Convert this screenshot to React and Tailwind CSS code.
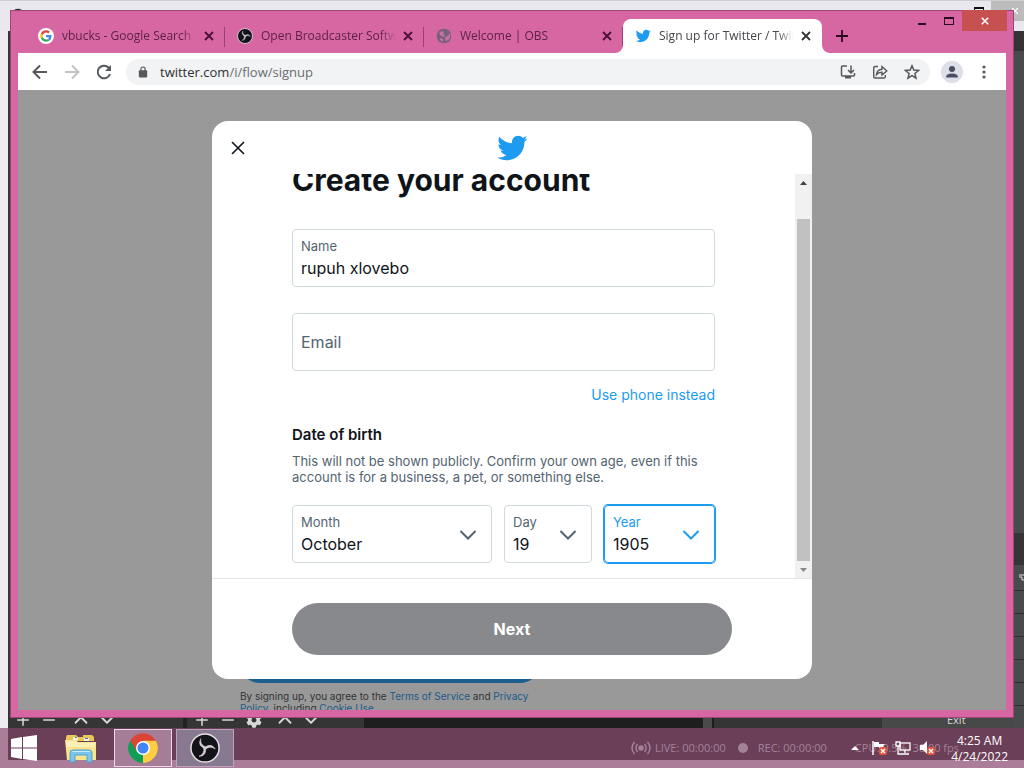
import { useState } from 'react';
import { Plus, Minus, ChevronUp, ChevronDown, X } from 'lucide-react';
import { FaCog } from 'react-icons/fa';

const BIRD = 'M23.643 4.937c-.835.37-1.732.62-2.675.733.962-.576 1.7-1.49 2.048-2.578-.9.534-1.897.922-2.958 1.13-.85-.904-2.06-1.47-3.4-1.47-2.572 0-4.658 2.086-4.658 4.66 0 .364.042.718.12 1.06-3.873-.195-7.304-2.05-9.602-4.868-.4.69-.63 1.49-.63 2.342 0 1.616.823 3.043 2.072 3.878-.764-.025-1.482-.234-2.11-.583v.06c0 2.257 1.605 4.14 3.737 4.568-.392.106-.803.162-1.227.162-.3 0-.593-.028-.877-.082.593 1.85 2.313 3.198 4.352 3.234-1.595 1.25-3.604 1.995-5.786 1.995-.376 0-.747-.022-1.112-.065 2.062 1.323 4.51 2.093 7.14 2.093 8.57 0 13.255-7.098 13.255-13.254 0-.2-.005-.402-.014-.602.91-.658 1.7-1.477 2.323-2.41z';

const Bird = ({ className }) => (
  <svg viewBox="0 0 24 24" className={className} fill="#1d9bf0"><path d={BIRD} /></svg>
);

const ObsLogo = ({ className }) => (
  <svg viewBox="0 0 32 32" className={className}>
    <circle cx="16" cy="16" r="15" fill="#15131a" stroke="#e6e1e6" strokeWidth="1.600" />
    {[0, 120, 240].map(a => (
      <path key={a} transform={`rotate(${a} 16 16)`} d="M11.500 6Q7.500 13 16 16.800L17 15Q10.500 12.500 11.500 6z" fill="#d5d0d6" stroke="#d5d0d6" strokeWidth=".6" />
    ))}
  </svg>
);

const GoogleLogo = () => (
  <svg viewBox="0 0 48 48" className="size-4 shrink-0">
    <circle cx="24" cy="24" r="24" fill="#fff" />
    <g transform="translate(7 7) scale(.71)">
      <path fill="#EA4335" d="M24 9.500c3.540 0 6.710 1.220 9.210 3.600l6.850-6.850C35.900 2.380 30.470 0 24 0 14.620 0 6.510 5.380 2.560 13.220l7.980 6.190C12.430 13.720 17.740 9.500 24 9.500z" />
      <path fill="#4285F4" d="M46.980 24.550c0-1.570-.15-3.090-.38-4.550H24v9.020h12.940c-.58 2.960-2.260 5.480-4.780 7.180l7.730 6c4.510-4.180 7.090-10.360 7.090-17.650z" />
      <path fill="#FBBC05" d="M10.530 28.590c-.48-1.450-.76-2.990-.76-4.590s.27-3.140.76-4.590l-7.980-6.190C.92 16.460 0 20.120 0 24c0 3.880.92 7.540 2.560 10.780l7.970-6.190z" />
      <path fill="#34A853" d="M24 48c6.480 0 11.930-2.130 15.890-5.810l-7.730-6c-2.150 1.450-4.920 2.300-8.160 2.300-6.260 0-11.570-4.220-13.470-9.910l-7.980 6.190C6.510 42.620 14.620 48 24 48z" />
    </g>
  </svg>
);

const Globe = () => (
  <svg viewBox="0 0 16 16" className="size-4 shrink-0">
    <circle cx="8" cy="8" r="7.300" fill="#76607a" />
    <path d="M3 5l3-2 2 1-1 2 2 1-1 2-3-1zM9 9l3-1 2-3 .5 3-2 4-3 1zM4 10l3 1v3l-3-2z" fill="#c86fa5" />
  </svg>
);

const ChromeLogo = () => (
  <svg viewBox="0 0 48 48" className="size-8">
    <path fill="#db4437" d="M24 24 4.950 13A22 22 0 0 1 43.050 13z" />
    <path fill="#0f9d58" d="M24 24v22A22 22 0 0 1 4.950 13z" />
    <path fill="#ffcd40" d="M24 24 43.050 13A22 22 0 0 1 24 46z" />
    <path fill="#db4437" d="M24 13h19.050L33 24zM4.950 13 24 13 14.500 29.500z" />
    <path fill="#0f9d58" d="M4.950 13 14.500 29.500 24 35 24 46A22 22 0 0 1 4.950 13z" />
    <path fill="#ffcd40" d="M43.050 13H24l9.500 16.500L24 46A22 22 0 0 0 43.050 13z" />
    <circle cx="24" cy="24" r="10.500" fill="#fff" />
    <circle cx="24" cy="24" r="8.300" fill="#4285f4" />
  </svg>
);

const Explorer = () => (
  <svg viewBox="0 0 32 30" className="h-[30px] w-8">
    <path d="M1 4l1-2h9l2 2h5V2h9l2 2v4H1z" fill="#e8c65a" />
    <path d="M8 4h5v3H8zM19 5h5v3h-5z" fill="#f7f3e0" />
    <path d="M10 4h2v1h-2z" fill="#2a8f5a" /><path d="M20 5h3v1h-3z" fill="#3a6ed0" />
    <path d="M0 7h11l2 2h18v18H2z" fill="#f8e48e" />
    <path d="M1 8h10l2 2h17v4H1z" fill="#fcf0b4" />
    <path d="M5 29v-9q0-3 3-3h16q3 0 3 3v9h-5v-7H10v7z" fill="#7cc4ea" stroke="#4ba3d4" />
    <path d="M6 19q1-1 3-1h14q2 0 3 1z" fill="#c9ebfa" />
  </svg>
);

const TABS = [
  { title: 'vbucks - Google Search', icon: <GoogleLogo /> },
  { title: 'Open Broadcaster Software', icon: <ObsLogo className="size-4 shrink-0" /> },
  { title: 'Welcome | OBS', icon: <Globe /> },
];

function Tab({ icon, title, active }) {
  return (
    <div className={active
      ? 'relative flex h-[34px] w-[199px] items-center rounded-t-lg bg-white pl-3 pr-2 text-[#45454a]'
      : 'relative flex h-[34px] w-[199px] items-center pl-3 pr-2 text-[#5c1f47]'}>
      {icon}
      <span className="ml-2 min-w-0 flex-1 overflow-hidden whitespace-nowrap text-xs [mask-image:linear-gradient(to_right,black_88%,transparent)]">{title}</span>
      <button aria-label="Close tab" className={active ? 'ml-1 grid size-4 place-items-center text-[#333]' : 'ml-1 grid size-4 place-items-center text-[#4a1038]'}>
        <svg viewBox="0 0 10 10" className="size-[10px]" stroke="currentColor" strokeWidth="1.800"><path d="M1 1l8 8M9 1l-8 8" /></svg>
      </button>
      {!active && <i className="absolute right-0 top-2 h-5 w-px bg-[#a03c78]" />}
      {active && <>
        <svg viewBox="0 0 8 8" className="absolute -left-2 bottom-0 size-2" fill="#fff"><path d="M8 0v8H0a8 8 0 0 0 8-8z" /></svg>
        <svg viewBox="0 0 8 8" className="absolute -right-2 bottom-0 size-2" fill="#fff"><path d="M0 0v8h8a8 8 0 0 1-8-8z" /></svg>
      </>}
    </div>
  );
}

function TabStrip() {
  return (
    <div className="flex h-[43px] items-end pl-2">
      {TABS.map(t => <Tab key={t.title} {...t} />)}
      <Tab active title="Sign up for Twitter / Twitter" icon={<Bird className="size-4 shrink-0" />} />
      <button aria-label="New tab" className="ml-[14px] flex h-[34px] items-center text-[#2c0a22]">
        <svg viewBox="0 0 12 12" className="size-3" stroke="currentColor" strokeWidth="1.800"><path d="M6 0v12M0 6h12" /></svg>
      </button>
      <div className="-mr-px ml-auto flex items-start self-start text-[#2c0a22]">
        <button aria-label="Minimize" className="grid h-5 w-[27px] place-items-center">
          <svg viewBox="0 0 10 10" className="size-[10px]"><path d="M1 8h8v2H1z" fill="currentColor" /></svg>
        </button>
        <button aria-label="Maximize" className="grid h-[22px] w-[27px] place-items-center">
          <svg viewBox="0 0 10 8" className="h-2 w-[10px]"><path d="M0 0h10v8H0zM1 2v5h8V2z" fill="currentColor" fillRule="evenodd" /></svg>
        </button>
        <button aria-label="Close" className="grid h-[21px] w-[45px] place-items-center bg-[#c75050] text-white">
          <svg viewBox="0 0 10 10" className="size-2" stroke="currentColor" strokeWidth="2"><path d="M1 1l8 8M9 1l-8 8" /></svg>
        </button>
      </div>
    </div>
  );
}

function Toolbar() {
  return (
    <div className="flex h-[37px] items-center bg-white pl-3 text-[#55585c]">
      <button aria-label="Back" className="w-5">
        <svg viewBox="0 0 20 20" className="size-5" fill="none" stroke="currentColor" strokeWidth="2"><path d="M17 10H4M10 3.500 3.500 10l6.500 6.500" /></svg>
      </button>
      <button aria-label="Forward" className="ml-3 w-5 text-[#c4c2c2]">
        <svg viewBox="0 0 20 20" className="size-5" fill="none" stroke="currentColor" strokeWidth="2"><path d="M3 10h13M10 3.500l6.500 6.500-6.500 6.500" /></svg>
      </button>
      <button aria-label="Reload" className="ml-3 w-5">
        <svg viewBox="0 0 20 20" className="size-5" fill="none" stroke="currentColor" strokeWidth="2"><path d="M16 12a6.300 6.300 0 1 1-1.500-6.500L16 7" /><path d="M17 3v6h-6z" fill="currentColor" stroke="none" /></svg>
      </button>
      <div className="ml-3 flex h-[26px] min-w-0 flex-1 items-center rounded-full bg-[#f1f3f4] pl-3 pr-[10px]">
        <svg viewBox="0 0 12 14" className="h-3 w-[10px]"><rect x="1" y="5" width="10" height="8.500" rx="1" fill="currentColor" /><path d="M3.500 6V3.500a2.500 2.500 0 0 1 5 0V6" fill="none" stroke="currentColor" strokeWidth="1.400" /></svg>
        <div className="ml-3 min-w-0 flex-1 text-[13px] leading-5 text-[#6a6d72]"><span className="text-[#2f3034]">twitter.com</span>/i/flow/signup</div>
        <div className="flex items-center gap-4">
          <button aria-label="Install">
            <svg viewBox="0 0 16 16" className="size-4" fill="none" stroke="currentColor" strokeWidth="1.500"><path d="M7 2H2.500q-1 0-1 1v8q0 1 1 1h11q1 0 1-1V9M11 1.500v7M8 6l3 3 3-3" /><path d="M5 12h6v2.500H5z" fill="currentColor" stroke="none" /></svg>
          </button>
          <button aria-label="Share">
            <svg viewBox="0 0 16 16" className="size-4" fill="none" stroke="currentColor" strokeWidth="1.400"><path d="M6 2.500H3q-1.300 0-1.300 1.300v9q0 1.200 1.300 1.200h9q1.300 0 1.300-1.200V11" /><path d="M4.500 10.500q.5-5 5.500-5.300V2.500L14.800 7 10 11V8.200q-3.800 0-5.500 2.300z" /></svg>
          </button>
          <button aria-label="Bookmark">
            <svg viewBox="0 0 16 16" className="size-4" fill="none" stroke="currentColor" strokeWidth="1.500"><path d="M8 1.800l1.800 4.300 4.700.4-3.600 3 1.100 4.600L8 11.600l-4 2.500 1.100-4.600-3.600-3 4.700-.4z" /></svg>
          </button>
        </div>
      </div>
      <button aria-label="Profile" className="mx-[11px] grid size-[22px] place-items-center rounded-full bg-[#dde0e8] text-[#4a4e60]">
        <svg viewBox="0 0 14 14" className="size-[14px]" fill="currentColor"><circle cx="7" cy="4" r="3" /><path d="M1 12.500q0-4 6-4t6 4z" /></svg>
      </button>
      <button aria-label="Menu" className="mr-3 grid h-5 w-5 place-items-center">
        <svg viewBox="0 0 4 14" className="h-[14px] w-1" fill="currentColor"><circle cx="2" cy="2" r="1.600" /><circle cx="2" cy="7" r="1.600" /><circle cx="2" cy="12" r="1.600" /></svg>
      </button>
    </div>
  );
}

function SelectField({ id, label, options, focused, className }) {
  const [value, setValue] = useState(options[0]);
  return (
    <div className={`relative flex h-[58px] flex-col rounded border pl-2 pt-2 ${className}`}>
      <label htmlFor={id} className={focused ? 'text-[13px] leading-4 text-[#1d9bf0]' : 'text-[13px] leading-4 text-[#536471]'}>{label}</label>
      <select id={id} value={value} onChange={e => setValue(e.target.value)}
        className="mt-[2px] w-full appearance-none bg-transparent text-base leading-6 text-[#0f1419] outline-none">
        {options.map(o => <option key={o}>{o}</option>)}
      </select>
      <svg viewBox="0 0 18 10" className={focused ? 'pointer-events-none absolute right-[14px] top-6 h-[10px] w-[18px] text-[#1d9bf0]' : 'pointer-events-none absolute right-[14px] top-6 h-[10px] w-[18px] text-[#536471]'} fill="none" stroke="currentColor" strokeWidth="2"><path d="M1.500 1 9 8.500 16.500 1" /></svg>
    </div>
  );
}

function SignupModal() {
  const [name, setName] = useState('rupuh xlovebo');
  const [email, setEmail] = useState('');

  return (
    <div role="dialog" aria-label="Create your account" className="flex w-[600px] flex-col overflow-hidden rounded-2xl bg-white">
      <div className="grid h-[53px] grid-cols-[1fr_auto_1fr] items-center px-4">
        <button aria-label="Close" className="grid size-5 place-items-center text-[#0f1419]">
          <svg viewBox="0 0 14 14" className="size-[14px]" stroke="currentColor" strokeWidth="1.600"><path d="M1 1l12 12M13 1L1 13" /></svg>
        </button>
        <Bird className="size-8" />
      </div>

      <div className="flex h-[404px] overflow-hidden">
        <form className="min-w-0 flex-1 px-20">
          <h1 className="-mt-3 text-[30px] font-bold leading-9 text-[#0f1419]">Create your account</h1>
          <div className="mt-[31px] flex h-[58px] flex-col rounded border border-[#cfd9de] px-2 pt-2">
            <label htmlFor="name" className="text-[13px] leading-4 text-[#536471]">Name</label>
            <input id="name" value={name} onChange={e => setName(e.target.value)} className="mt-[2px] text-base leading-6 text-[#0f1419] outline-none" />
          </div>
          <div className="mt-[26px] flex h-[58px] items-center rounded border border-[#cfd9de] px-2">
            <input aria-label="Email" placeholder="Email" value={email} onChange={e => setEmail(e.target.value)}
              className="w-full text-base leading-6 outline-none placeholder:text-[#536471]" />
          </div>
          <div className="mt-[14px] text-right text-sm leading-5"><a href="#phone" className="text-[#1d9bf0]">Use phone instead</a></div>
          <h2 className="mt-5 text-[15px] font-semibold leading-5 text-[#0f1419]">Date of birth</h2>
          <p className="mt-2 text-[13px] leading-4 text-[#536471]">This will not be shown publicly. Confirm your own age, even if this account is for a business, a pet, or something else.</p>
          <div className="mt-5 flex gap-3">
            <SelectField id="month" label="Month" options={['October', 'November', 'December']} className="w-[200px] border-[#cfd9de]" />
            <SelectField id="day" label="Day" options={['19', '20', '21']} className="w-[88px] border-[#cfd9de]" />
            <SelectField id="year" label="Year" options={['1905', '1906', '1907']} focused className="flex-1 border-[#1d9bf0] ring-1 ring-[#1d9bf0]" />
          </div>
        </form>
        <div className="flex w-[17px] flex-col items-center bg-[#f1f1f1]">
          <svg viewBox="0 0 17 17" className="size-[17px] shrink-0"><path d="M5 11l3.500-4L12 11z" fill="#444" /></svg>
          <div className="mt-7 w-[13px] flex-1 bg-[#c1c1c1]" />
          <svg viewBox="0 0 17 17" className="size-[17px] shrink-0"><path d="M5 7l3.500 4L12 7z" fill="#888" /></svg>
        </div>
      </div>

      <div className="border-t border-[#e2e4e6] px-20 py-6">
        <button className="h-[52px] w-full rounded-full bg-[#87898c] text-base font-bold text-white">Next</button>
      </div>
    </div>
  );
}

function BrowserWindow() {
  return (
    <div className="absolute bottom-[50px] left-[10px] right-[10px] top-[10px] flex flex-col border border-[#a14377] bg-[#d667a2] px-[7px] pb-[7px]">
      <div className="-mt-px flex min-h-0 flex-1 flex-col">
        <TabStrip />
        <Toolbar />
        <main className="relative min-h-0 flex-1 overflow-hidden bg-[#999] font-['Inter',sans-serif]">
          <div className="ml-[222px] flex w-[300px] flex-col pt-[553px]">
            <button className="h-10 rounded-full bg-[#1c5f8c] text-sm font-bold text-[#999]">Sign up with phone or email</button>
            <p className="mt-[7px] text-[10px] leading-3 text-[#303436]">
              By signing up, you agree to the <a href="#terms" className="text-[#1b5a88]">Terms of Service</a> and <a href="#privacy" className="text-[#1b5a88]">Privacy Policy</a>, including <a href="#cookies" className="text-[#1b5a88]">Cookie Use.</a>
            </p>
          </div>
          <div className="absolute inset-0 grid place-items-center">
            <SignupModal />
          </div>
        </main>
      </div>
    </div>
  );
}

// OBS sits maximised behind the browser, only its edges show
function ObsWindow() {
  return (
    <div className="absolute inset-x-0 bottom-10 top-0 flex flex-col border-t border-[#cfcdd2] bg-[#474949]">
      <div className="flex h-[30px] shrink-0 items-start bg-[#e9e8ee]">
        <ObsLogo className="ml-[10px] mt-[7px] size-4" />
        <svg viewBox="0 0 10 8" className="ml-auto mr-[7px] mt-[6px] h-2 w-[10px]"><path d="M0 0h10v8H0zM1 2v5h8V2z" fill="#111" fillRule="evenodd" /></svg>
        <div className="flex h-5 w-[33px] items-center justify-end bg-[#bcbcbc] pr-1 text-white"><X size={10} strokeWidth={3} /></div>
      </div>
      <div className="flex min-h-0 flex-1">
        <div className="w-2 bg-[#eeecf0]" />
        <div className="flex min-w-0 flex-1 flex-col justify-end bg-[#3a3338]">
          <div className="flex h-4 items-center overflow-hidden bg-[#353535] text-[#d8d8d8]">
            <div className="flex h-4 w-[175px] items-center pl-[6px]">
              <Plus size={18} /><Minus size={18} className="ml-2" /><ChevronUp size={22} className="ml-3" /><ChevronDown size={22} className="ml-1" />
            </div>
            <i className="h-4 w-1 bg-[#222]" />
            <div className="flex h-4 w-[177px] items-center pl-[6px]">
              <Plus size={18} /><Minus size={18} className="ml-2" /><FaCog size={16} className="ml-[9px]" /><ChevronUp size={22} className="ml-3" /><ChevronDown size={22} className="ml-1" />
            </div>
            <i className="h-4 w-[339px] bg-[#1e1e1e]" />
            <i className="h-4 w-[9px] bg-[#4a4a4a]" />
            <i className="h-4 w-[170px] border-l-2 border-[#1e1e1e]" />
            <div className="flex h-4 flex-1 items-center bg-[#474949] pl-[65px] text-[11px] leading-4">Exit</div>
          </div>
        </div>
        <div className="flex w-[10px] flex-col bg-[#484b4b]">
          <div className="h-5 bg-[#333]" />
          <div className="flex-1" />
          <div className="h-8 bg-[#353535]" />
          <div className="flex h-[25px] items-center justify-end">
            <svg viewBox="0 0 6 8" className="h-2 w-[6px]" fill="none" stroke="#ddd"><path d="M1 1h5M1 3h3v3h2" /></svg>
          </div>
          {[0, 1, 2, 3, 4, 5].map(i => <div key={i} className="h-[23px] border-t border-[#2e3030]" />)}
        </div>
      </div>
    </div>
  );
}

const RedCross = () => <><rect x="8" y="7" width="8" height="8" rx="2" fill="#e2553a" /><path d="M10 9l4 4M14 9l-4 4" stroke="#fff" strokeWidth="1.400" /></>;

function Taskbar() {
  return (
    <div className="absolute inset-x-0 bottom-0 flex h-10 items-center border-b-8 border-l-8 border-[#ab7d98] bg-[#6b3f58]">
      <div className="absolute inset-y-0 right-[65px] flex items-center whitespace-nowrap pt-2 text-[11px] text-[#a48297]">
        <svg viewBox="0 0 20 14" className="h-[14px] w-5" fill="none" stroke="currentColor" strokeWidth="1.400"><circle cx="10" cy="7" r="2" fill="currentColor" /><path d="M6.500 3q-3 4 0 8M13.500 3q3 4 0 8M3.500 1q-5 6 0 12M16.500 1q5 6 0 12" /></svg>
        <span className="ml-1">LIVE: 00:00:00</span>
        <i className="ml-3 size-[10px] rounded-full bg-[#a48297]" />
        <span className="ml-[10px]">REC: 00:00:00</span>
        <span className="ml-7">CPU: 0.5%, 30.00 fps</span>
      </div>
      <div className="relative -mb-2 flex h-10 flex-1 items-center">
        <button aria-label="Start" className="ml-[3px]">
          <svg viewBox="0 0 26 26" className="size-[26px]" fill="#fff"><path d="M0 4l11-2v10.500H0zM12 2l14-2v12.500H12zM0 13.500h11V24L0 22zM12 13.500h14V26l-14-2z" /></svg>
        </button>
        <button aria-label="File Explorer" className="ml-7"><Explorer /></button>
        <button aria-label="Chrome" className="ml-[17px] grid h-[38px] w-[58px] place-items-center border border-[#e8dbe4] bg-[#a57d96]"><ChromeLogo /></button>
        <button aria-label="OBS" className="ml-1 grid h-[38px] w-[58px] place-items-center border border-[#b7a4b8] bg-[#877990]"><ObsLogo className="size-[30px]" /></button>
        <div className="ml-auto flex items-center gap-2 text-white">
          <svg viewBox="0 0 8 4" className="mr-1 h-1 w-2" fill="currentColor"><path d="M0 4l4-4 4 4z" /></svg>
          <svg viewBox="0 0 16 16" className="size-4"><path d="M2 1v14" stroke="#fff" strokeWidth="1.500" /><path d="M3 2h5v2h6l-2 2 2 2H8V7H3z" fill="#fff" /><RedCross /></svg>
          <svg viewBox="0 0 16 16" className="size-4" fill="none" stroke="#fff" strokeWidth="1.300"><rect x="5" y="3" width="10" height="7" /><path d="M10 10v3M6 14h8M1 2h4v4H1zM3 6v8h3" /></svg>
          <svg viewBox="0 0 16 16" className="size-4"><path d="M1 5h3l4-4v13l-4-4H1z" fill="#fff" /><RedCross /></svg>
        </div>
        <div className="ml-4 mr-4 pt-[2px] text-center text-xs leading-4 text-white">4:25 AM<br />4/24/2022</div>
      </div>
    </div>
  );
}

export default function App() {
  return (
    <div className="relative h-screen min-h-[728px] w-full overflow-hidden font-['Open_Sans',sans-serif]">
      <ObsWindow />
      <BrowserWindow />
      <Taskbar />
    </div>
  );
}
